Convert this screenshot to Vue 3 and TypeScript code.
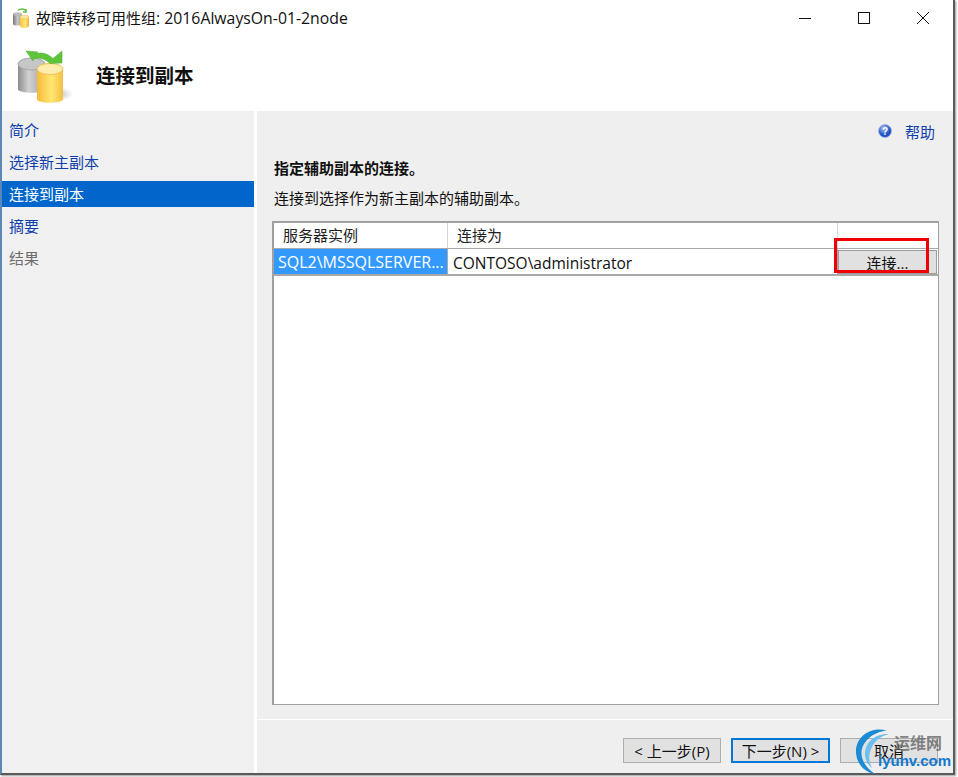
<script setup lang="ts">
const steps: { label: string; state: string }[] = [
  { label: '简介', state: 'link' },
  { label: '选择新主副本', state: 'link' },
  { label: '连接到副本', state: 'active' },
  { label: '摘要', state: 'link' },
  { label: '结果', state: 'muted' },
]
</script>

<template>
  <div class="screen">
    <div class="window">
      <div class="titlebar">
        <svg class="title-icon" width="19" height="20" viewBox="0 0 19 20">
          <defs>
            <linearGradient id="ty" x1="0" x2="1" y1="0" y2="0"><stop offset="0" stop-color="#f6c63c" /><stop offset="0.6" stop-color="#ffe680" /><stop offset="1" stop-color="#f0b030" /></linearGradient>
            <linearGradient id="tg" x1="0" x2="1" y1="0" y2="0"><stop offset="0" stop-color="#777" /><stop offset="0.5" stop-color="#c8c8c8" /><stop offset="1" stop-color="#999" /></linearGradient>
          </defs>
          <path d="M6 2.5 C8 0.5 12 0.5 14 2.5 M14 1v3h-3" fill="none" stroke="#5cbf3a" stroke-width="1.5" />
          <path d="M1 6h9v10c0 2-9 2-9 0z" fill="url(#tg)" />
          <ellipse cx="5.5" cy="6" rx="4.5" ry="1.8" fill="#bbb" />
          <path d="M8 9h9v9c0 2.5-9 2.5-9 0z" fill="url(#ty)" />
          <ellipse cx="12.5" cy="9" rx="4.5" ry="1.8" fill="#fbe9a0" stroke="#e8b840" stroke-width=".5" />
        </svg>
        <span class="title-text"><span class="title-cn">故障转移可用性组</span>: 2016AlwaysOn-01-2node</span>
        <div class="controls">
          <svg width="14" height="14" viewBox="0 0 14 14"><path d="M1 7.5h12" stroke="#111" stroke-width="1" /></svg>
          <svg width="14" height="14" viewBox="0 0 14 14"><rect x="1.5" y="1.5" width="11" height="11" fill="none" stroke="#111" stroke-width="1" /></svg>
          <svg width="14" height="14" viewBox="0 0 14 14"><path d="M1 1l12 12M13 1L1 13" stroke="#111" stroke-width="1" /></svg>
        </div>
      </div>

      <div class="banner">
        <svg class="banner-icon" width="58" height="60" viewBox="0 0 58 60">
          <defs>
            <linearGradient id="by" x1="0" x2="1" y1="0" y2="0"><stop offset="0" stop-color="#f7b93a" /><stop offset="0.55" stop-color="#ffe772" /><stop offset="1" stop-color="#f3bf45" /></linearGradient>
            <linearGradient id="bg" x1="0" x2="1" y1="0" y2="0"><stop offset="0" stop-color="#8c8c8c" /><stop offset="0.4" stop-color="#d2d2d2" /><stop offset="1" stop-color="#9c9c9c" /></linearGradient>
            <radialGradient id="sh"><stop offset="0" stop-color="#8a8a8a" stop-opacity=".6" /><stop offset="1" stop-color="#999" stop-opacity="0" /></radialGradient>
          </defs>
          <ellipse cx="42" cy="50" rx="15" ry="7" fill="url(#sh)" />
          <path d="M2 20h27v25c0 5-27 5-27 0z" fill="url(#bg)" />
          <ellipse cx="15.500" cy="20" rx="13.500" ry="6" fill="#c6c6c6" stroke="#a8a8a8" />
          <path d="M21 25h26v30c0 5-26 5-26 0z" fill="url(#by)" />
          <ellipse cx="34" cy="25" rx="13" ry="5.500" fill="#fdeeb0" stroke="#efc050" />
          <path d="M10 7 L22 8 L19 10 C25 8 31 9 37 14.500 L46 7 L46 19 L34 19.500 C29 14.500 23 13 17.500 15 L17 17 Z" fill="#5ec53b" stroke="#4aa82e" stroke-width=".5" />
        </svg>
        <span class="banner-title">连接到副本</span>
      </div>

      <div class="body">
        <nav class="sidebar">
          <div v-for="s in steps" :key="s.label" class="step" :class="s.state">{{ s.label }}</div>
        </nav>

        <main class="content">
          <div class="content-main">
            <div class="help">
              <svg width="14" height="14" viewBox="0 0 14 14">
                <defs><radialGradient id="hb" cx=".4" cy=".3"><stop offset="0" stop-color="#a9c8f5" /><stop offset="1" stop-color="#1f4fc0" /></radialGradient></defs>
                <circle cx="7" cy="7" r="6.5" fill="url(#hb)" stroke="#9db6e6" stroke-width=".8" />
                <text x="7" y="10.500" text-anchor="middle" font-size="10" font-weight="700" font-family="Liberation Sans, sans-serif" fill="#fff">?</text>
              </svg>
              <span class="help-text">帮助</span>
            </div>
            <h2 class="heading">指定辅助副本的连接。</h2>
            <p class="desc">连接到选择作为新主副本的辅助副本。</p>

            <div class="grid">
              <div class="grid-row head">
                <div class="cell c1 hcell">服务器实例</div>
                <div class="cell c2 hcell">连接为</div>
                <div class="cell c3"></div>
              </div>
              <div class="grid-row data">
                <div class="cell c1 selected">SQL2\MSSQLSERVER...</div>
                <div class="cell c2 value">CONTOSO\administrator</div>
                <div class="cell c3 btn-cell"><button class="connect">连接...</button></div>
              </div>
              <div class="red-box"></div>
            </div>
          </div>

          <footer class="footer">
            <button class="wbtn">&lt; 上一步(P)</button>
            <button class="wbtn primary">下一步(N) &gt;</button>
            <button class="wbtn">取消</button>
          </footer>
        </main>
      </div>
    </div>

    <div class="watermark">
      <svg class="wm-swirl" width="48" height="46" viewBox="0 0 48 46">
        <path d="M32 1.500 C14 -3 0 9 1 24 C2 35 9 43 20 45 C11 39 6 31 6.500 23 C7.500 12 18 3 32 1.500Z" fill="#1b8bd6" />
        <path d="M34 5 C21 4 10 13 10 25 C10 31 13 36 17 39 C14 33 13 27 16 20 C19 12 26 7 34 5Z" fill="#6cbfee" />
      </svg>
      <span class="wm-cn">运维网</span>
      <span class="wm-en">iyunv.com</span>
    </div>
  </div>
</template>

<style scoped>
.screen {
  position: relative;
  width: 958px;
  height: 777px;
  overflow: hidden;
  background: #fff;
  font-family: "Open Sans", "Noto Sans CJK SC", sans-serif;
  font-size: 15px;
  color: #111;
}
.window {
  width: 955px;
  height: 775px;
  box-sizing: border-box;
  display: flex;
  flex-direction: column;
  background: #fff;
  border-left: 2px solid #5b86b8;
  border-right: 2px solid #5a5a5a;
  border-bottom: 2px solid #5a5a5a;
  box-shadow: 1px 1px 2px #999;
}
.titlebar {
  height: 36px;
  flex: none;
  display: flex;
  align-items: center;
  padding-left: 10px;
}
.title-icon { flex: none; margin-right: 5px; }
.title-text { font-size: 15.8px; white-space: nowrap; }
.title-cn { font-size: 15px; }
.controls {
  margin-left: auto;
  display: flex;
  gap: 45px;
  padding-right: 23px;
  margin-top: -1px;
}
.banner {
  height: 75px;
  flex: none;
  display: flex;
  align-items: center;
  padding-left: 14px;
}
.banner-icon { flex: none; margin-right: 22px; }
.banner-title { font-size: 19.5px; font-weight: 700; margin-top: 1px; }
.body {
  flex: 1;
  min-height: 0;
  display: flex;
  gap: 3px;
}
.sidebar {
  width: 252px;
  flex: none;
  background: #f0f0f0;
  padding-top: 6px;
}
.step {
  height: 26px;
  margin-bottom: 6px;
  padding-left: 7px;
  line-height: 26px;
  color: #0f3fae;
}
.step.active { background: #0066cc; color: #fff; }
.step.muted { color: #6d6d6d; }
.content {
  flex: 1;
  min-width: 0;
  display: flex;
  flex-direction: column;
  background: #efefef;
}
.content-main {
  flex: 1;
  min-height: 0;
  padding: 10px 14px 14px 15px;
  display: flex;
  flex-direction: column;
}
.help {
  display: flex;
  align-items: center;
  justify-content: flex-end;
  height: 21px;
  padding-right: 4px;
  gap: 13px;
}
.help svg { margin-top: -2px; }
.help-text { color: #0f3fae; }
.heading {
  margin: 16px 0 0 2px;
  font-size: 15px;
  font-weight: 700;
  line-height: 20px;
}
.desc {
  margin: 10px 0 0 2px;
  font-size: 15px;
  line-height: 20px;
}
.grid {
  position: relative;
  margin-top: 13px;
  flex: 1;
  background: #fff;
  border: 2px solid #a0a0a0;
  border-right-width: 1px;
  border-bottom-width: 1px;
}
.grid-row { display: flex; box-sizing: border-box; }
.grid-row.head { height: 26px; border-bottom: 1px solid #a9a9a9; margin-bottom: 0; }
.grid-row.data { height: 27px; border-bottom: 2px solid #a9a9a9; }
.cell { box-sizing: border-box; white-space: nowrap; overflow: hidden; }
.c1 { width: 174px; flex: none; border-right: 1px solid #d4d4d4; }
.c2 { flex: 1; min-width: 0; border-right: 1px solid #d4d4d4; }
.c3 { width: 100px; flex: none; }
.hcell { padding-left: 9px; line-height: 25px; color: #222; }
.selected { background: #3399ff; color: #fff; padding-left: 4px; line-height: 27px; font-size: 16px; border-right-color: #a9a9a9; }
.value { padding-left: 5px; line-height: 28px; font-size: 15.5px; border-right-color: #a9a9a9; }
.btn-cell { padding: 1px 1px 0 0; }
.connect {
  display: block;
  width: 100%;
  height: 24px;
  padding: 0;
  box-sizing: border-box;
  border: 1px solid #9c9c9c;
  background: #e1e1e1;
  color: #111;
  font: inherit;
}
.red-box {
  position: absolute;
  left: 560px;
  top: 15px;
  width: 95px;
  height: 35px;
  box-sizing: border-box;
  border: 3px solid #f00000;
  pointer-events: none;
}
.footer {
  height: 54px;
  flex: none;
  box-sizing: border-box;
  border-top: 1px solid #fff;
  display: flex;
  gap: 10px;
  padding: 18px 0 0 366px;
}
.wbtn {
  width: 98px;
  height: 25px;
  padding: 0;
  box-sizing: border-box;
  border: 1px solid #adadad;
  background: #e1e1e1;
  color: #111;
  font: inherit;
  line-height: 20px;
}
.wbtn.primary { width: 99px; border: 2px solid #0078d7; }
.watermark {
  position: absolute;
  left: 853px;
  top: 729px;
  width: 105px;
  height: 48px;
  pointer-events: none;
}
.wm-swirl { position: absolute; left: 2px; top: 0; }
.wm-cn {
  position: absolute;
  left: 41px;
  top: 5px;
  font-size: 16px;
  line-height: 18px;
  font-weight: 700;
  color: rgba(110, 110, 110, 0.85);
  white-space: nowrap;
}
.wm-en {
  position: absolute;
  left: 25px;
  top: 23px;
  font-family: "Liberation Sans", sans-serif;
  font-size: 15px;
  line-height: 18px;
  font-weight: 700;
  color: #1279cf;
  white-space: nowrap;
}
</style>
